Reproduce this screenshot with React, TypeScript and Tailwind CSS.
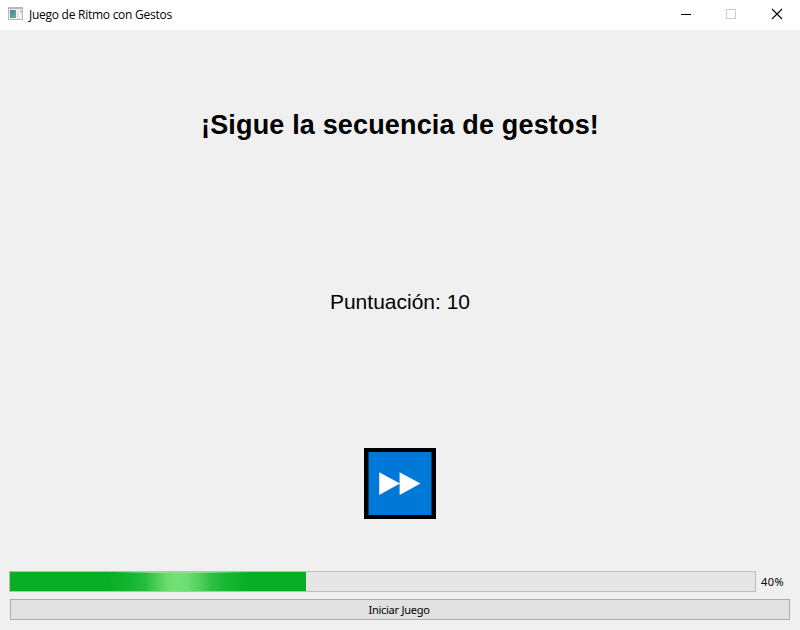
import React from "react";

function AppIcon() {
  return (
    <svg width="15" height="13" viewBox="0 0 15 13" shapeRendering="crispEdges">
      <defs>
        <linearGradient id="pane" x1="0" y1="0" x2="1" y2="1">
          <stop offset="0" stopColor="#4a7fa8" />
          <stop offset="1" stopColor="#5fb87f" />
        </linearGradient>
      </defs>
      <rect width="15" height="13" fill="#b4b7bf" />
      <rect x="1" y="2" width="13" height="10" fill="#f1f2f5" />
      <rect x="2" y="3" width="6" height="8" fill="url(#pane)" />
      <rect x="9" y="3" width="2" height="8" fill="#e4e6ea" />
      <rect x="12" y="3" width="2" height="3" fill="#b5d6cd" />
    </svg>
  );
}

function TitleBar() {
  return (
    <header className="flex h-[30px] items-center bg-white pl-2">
      <div className="-mt-[3px]">
        <AppIcon />
      </div>
      <span className="ml-[6px] flex-1 whitespace-nowrap font-['Open_Sans','Noto_Sans',sans-serif] text-[12px] leading-[30px] tracking-[-0.26px]">
        Juego de Ritmo con Gestos
      </span>
      <svg width="137" height="30" viewBox="0 0 137 30" fill="none" shapeRendering="crispEdges">
        <rect x="18" y="14" width="10" height="1" fill="#000" />
        <rect x="63.5" y="9.5" width="9" height="9" stroke="#ccc" />
        <path d="M109 9l10 10M119 9l-10 10" stroke="#000" strokeWidth="1.1" shapeRendering="auto" />
      </svg>
    </header>
  );
}

function FastForward() {
  return (
    <svg width="72" height="71" viewBox="0 0 72 71">
      <rect width="72" height="71" fill="#000" />
      <rect x="4.5" y="4" width="63" height="63" fill="#0078d7" />
      <path d="M15.2 24.2L36 35.5L15.2 47ZM35.6 24.2L56.5 35.5L35.6 47Z" fill="#fff" />
    </svg>
  );
}

function Progress({ value }: { value: number }) {
  return (
    <div className="ml-[9px] flex h-[21px] items-center">
      <div className="h-full w-[747px] border border-[#bcbcbc] bg-[#e6e6e6]">
        <div className="h-full w-[296px] bg-[linear-gradient(90deg,#06b025_0px,#06b025_98px,#12b52e_120px,#25bd3d_135px,#4bce59_147px,#69dc6f_157px,#72e077_166px,#6cdd72_177px,#55d262_188px,#30c246_200px,#18b733_215px,#06b025_238px)]">
          <div className="ml-[104px] h-px w-[136px] bg-[linear-gradient(90deg,transparent,#8ce58e_35%,#8ce58e_60%,transparent)]" />
        </div>
      </div>
      <span className="ml-[5px] font-['Noto_Sans',sans-serif] text-[11px] leading-[21px] tracking-[0.4px]">{value}%</span>
    </div>
  );
}

export default function App() {
  return (
    <main className="flex h-[630px] w-[800px] flex-col overflow-hidden bg-[#f0f0f0] text-black">
      <TitleBar />
      <h1 className="mt-[75px] h-10 whitespace-nowrap text-center font-['Liberation_Sans',Arial,sans-serif] text-[27px] font-bold leading-10 tracking-[0.16px]">
        ¡Sigue la secuencia de gestos!
      </h1>
      <p className="mt-[141px] h-8 whitespace-nowrap text-center font-['Liberation_Sans',Arial,sans-serif] text-[21px] leading-8">
        Puntuación: 10
      </p>
      <div className="mt-[130px] flex justify-center">
        <FastForward />
      </div>
      <div className="mt-[52px]">
        <Progress value={40} />
      </div>
      <button className="mx-[10px] mt-[7px] flex h-[21px] items-center justify-center border border-[#adadad] bg-[#e1e1e1] pr-[2px] font-['Noto_Sans',sans-serif] text-[11px] leading-[19px] tracking-[-0.26px]">
        Iniciar Juego
      </button>
    </main>
  );
}
